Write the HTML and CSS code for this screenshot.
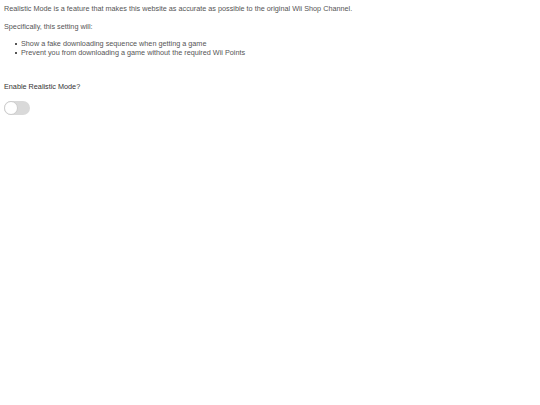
FILE: index.html
```html
<!DOCTYPE html>
<html>
<head>
<meta charset="utf-8">
<link rel="stylesheet" href="styles.css">
</head>
<body>
<div class="page">
  <p class="intro">Realistic Mode is a feature that makes this website as accurate as possible to the original Wii Shop Channel.</p>
  <p class="lead">Specifically, this setting will:</p>
  <ul class="list">
    <li>Show a fake downloading sequence when getting a game</li>
    <li>Prevent you from downloading a game without the required Wii Points</li>
  </ul>
  <p class="label">Enable Realistic Mode?</p>
  <div class="toggle"><span class="knob"></span></div>
</div>
</body>
</html>
```

FILE: styles.css
```css
html, body { margin: 0; padding: 0; background: #fff; }
.page {
  padding: 4px 4px;
  font-family: "Liberation Sans", Arial, sans-serif;
  font-size: 7.25px;
  line-height: 9px;
  color: #555;
}
.intro { margin: 0; }
.lead { margin: 9px 0 0; }
.list { margin: 8px 0 0; padding-left: 17px; list-style: none; }
.list li { margin: 0; position: relative; }
.list li::before {
  content: "";
  position: absolute;
  left: -6px;
  top: 4px;
  width: 2px;
  height: 2px;
  background: #555;
}
.label { margin: 25px 0 0; color: #333; }
.toggle {
  margin-top: 10px;
  width: 26px;
  height: 14px;
  border-radius: 7px;
  background: #d9d9d9;
  position: relative;
}
.knob {
  position: absolute;
  left: 0;
  top: 0;
  width: 12px;
  height: 12px;
  border-radius: 50%;
  background: #fff;
  border: 1px solid #ccc;
}
```
